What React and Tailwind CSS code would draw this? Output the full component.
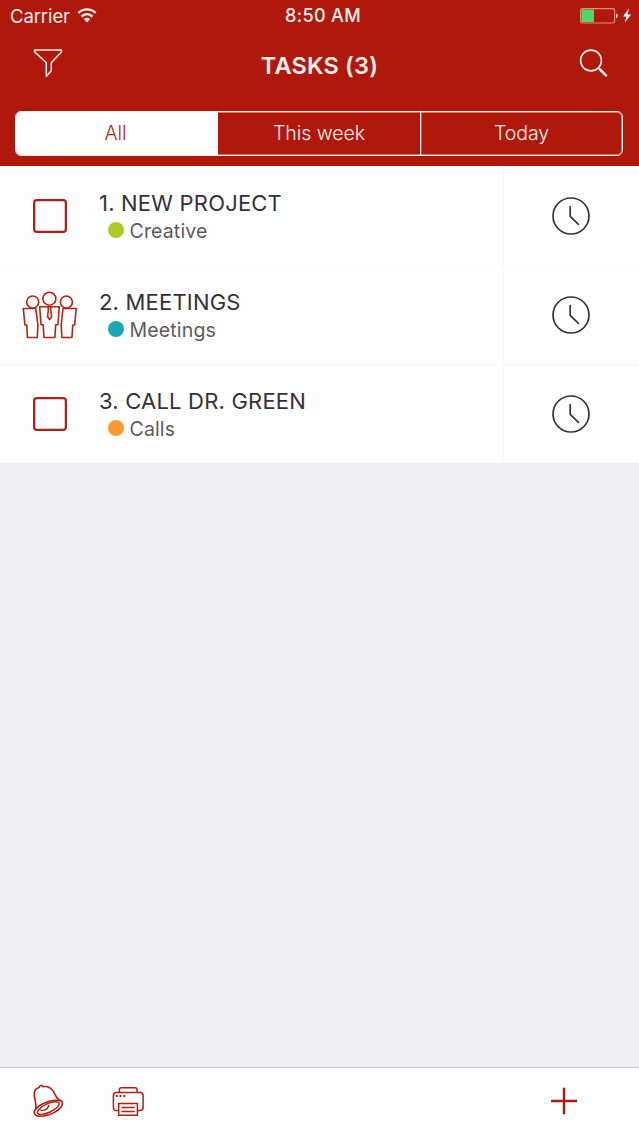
import React from "react";

const FilterIcon = () => (
  <svg className="h-8 w-8" viewBox="0 0 32 32" fill="none" stroke="#fff0ea" strokeWidth="1.5" strokeLinejoin="round">
    <path d="M2.6 2H29.4V3.9L19.3 14.7V22.8L14.3 28.2V14.7L2.6 3.9Z" />
  </svg>
);

const SearchIcon = () => (
  <svg className="h-8 w-8" viewBox="0 0 32 32" fill="none" stroke="#fff0ea" strokeLinecap="round">
    <circle cx="13" cy="12.5" r="10.4" strokeWidth="1.6" />
    <path d="M20.6 20L22 21.4" strokeWidth="1.6" />
    <path d="M22.2 21.7L28 27.4" strokeWidth="2.6" />
  </svg>
);

const WifiIcon = () => (
  <svg className="h-4 w-5" viewBox="0 0 20 16" fill="none" stroke="#fff4f0" strokeWidth="2.4">
    <path d="M1.3 5C6.3 .2 13.7 .2 18.7 5" />
    <path d="M4.5 8.5C7.8 5.5 12.2 5.5 15.5 8.5" />
    <path d="M10 14.4L6.8 11.1C8.6 9.4 11.4 9.4 13.2 11.1Z" fill="#fff4f0" stroke="none" />
  </svg>
);

const BatteryIcon = () => (
  <svg className="h-4 w-[52px]" viewBox="0 0 52 16" fill="none">
    <rect x="0.6" y="0.6" width="34" height="14.4" rx="2.2" stroke="#e99074" strokeWidth="1.1" />
    <rect x="1.5" y="1.5" width="12.5" height="12.6" rx="1" fill="#4cd964" />
    <path d="M36 5.4C38.4 5.8 38.4 9.8 36 10.2Z" fill="#ffe0cf" />
    <path d="M49 0.6L43 8.4H46.3L44.8 14.6L51.2 6.5H47.6Z" fill="#fff" />
  </svg>
);

const ClockIcon = () => (
  <svg className="h-10 w-10" viewBox="0 0 40 40" fill="none" stroke="#36343a" strokeWidth="1.7" strokeLinecap="round">
    <circle cx="20" cy="20" r="18" />
    <path d="M19.2 10.6V20.4L27.4 28.3" strokeLinejoin="round" />
  </svg>
);

const PeopleIcon = () => (
  <svg className="h-[54px] w-[60px]" viewBox="0 0 60 54" fill="none" stroke="#b52216" strokeWidth="1.6" strokeLinejoin="round">
    <circle cx="12.7" cy="14" r="6" />
    <path d="M3.3 20.5H15.8L17.9 37L17.3 49.5H7.4L6.8 37H4.9Z" />
    <circle cx="29.4" cy="10.7" r="6.5" />
    <path d="M19.7 18.7H39.3L37.9 36.7H35.7L34.9 49.5H24L23.2 36.7H21Z" />
    <path d="M28 18.8H30.9L30.7 21L31.6 28.8L29.6 31.5L27.6 28.8L28.4 21Z" />
    <circle cx="46.4" cy="14" r="6" />
    <path d="M43 20.5H56.2L54.7 37H52.8L51.9 49.5H41.9L41.2 37Z" />
  </svg>
);

const BellIcon = () => (
  <svg className="h-[34px] w-8" viewBox="0 0 32 34" fill="none" stroke="#b21f13" strokeWidth="1.6" strokeLinejoin="round">
    <path d="M3.3 25.8C5.6 20.8 2 15.4 2.2 9.8C2.2 6.5 4.5 4.1 7.2 3.5C7.3 1 9.7 .8 11 2.6C15 2 19.2 4 21.4 7.4C24.2 11.8 23.8 15 29.7 17.2" />
    <path d="M29.7 17.2C32 20.1 28.5 25.2 22 28.6C14.5 32.5 4.7 33.8 2.7 29.9C2 28.5 2.2 27.1 3.3 25.8C6 21.5 15.5 16.4 24 16.3C27 16.3 29 16.4 29.7 17.2Z" />
    <ellipse cx="16.3" cy="24.1" rx="11.9" ry="4.3" transform="rotate(-25 16.3 24.1)" strokeWidth="1.4" />
    <path d="M8.4 25.6C10 27.8 15.8 26 17 20.8" strokeWidth="1.4" />
  </svg>
);

const PrinterIcon = () => (
  <svg className="h-8 w-8" viewBox="0 0 32 32" fill="none" stroke="#b21f13" strokeWidth="1.5">
    <path d="M7.4 7.4V4.8C7.4 3.5 8.2 2.7 9.5 2.7H22.9C24.2 2.7 25 3.5 25 4.8V7.4" />
    <path d="M6.6 25.6H4.4C2.5 25.6 1.4 24.5 1.4 22.6V10.4C1.4 8.5 2.5 7.4 4.4 7.4H28.1C30 7.4 31.1 8.5 31.1 10.4V22.6C31.1 24.5 30 25.6 28.1 25.6H25.4" />
    <path d="M6.7 18.4H25.4V30.2H6.7ZM9.4 22.6H22.7M9.4 26.4H22.7" />
    <path d="M3.8 11.1H5.8M7.5 11.1H9.5M11.3 11.1H13.3" strokeWidth="2" />
  </svg>
);

const PlusIcon = () => (
  <svg className="h-7 w-7" viewBox="0 0 28 28" fill="none" stroke="#ac1a10" strokeWidth="2.4">
    <path d="M14 0.8V27.2M1 14H27" />
  </svg>
);

const Checkbox = () => (
  <span className="h-[34px] w-[34px] rounded-[4px] border-2 border-[#ad2018] shadow-[inset_0_0_0_0.5px_#ad201880]" />
);

const tasks = [
  { title: "1. NEW PROJECT", category: "Creative", dot: "bg-[#aecb24]", icon: <Checkbox /> },
  { title: "2. MEETINGS", category: "Meetings", dot: "bg-[#19a6b8]", icon: <PeopleIcon /> },
  { title: "3. CALL DR. GREEN", category: "Calls", dot: "bg-[#fb9934]", icon: <Checkbox /> },
];

export default function App() {
  return (
    <div className="flex h-[1136px] w-[639px] flex-col overflow-hidden bg-[#efeef1] font-['Inter',sans-serif]">
      <header className="h-[166px] shrink-0 bg-[#af180a] text-[#fff0ea]">
        <div className="grid h-8 grid-cols-3 items-center pr-[7px] pl-[10px]">
          <div className="flex items-center gap-[7px]">
            <span className="text-[18.5px] leading-8 tracking-[-0.1px]">Carrier</span>
            <WifiIcon />
          </div>
          <span className="pl-[4px] text-center text-[18px] leading-8 font-medium tracking-[0.35px]">8:50 AM</span>
          <div className="flex justify-end">
            <BatteryIcon />
          </div>
        </div>
        <div className="flex h-[79px] items-start justify-between pr-[29px] pl-8">
          <button className="pt-4" aria-label="Filter"><FilterIcon /></button>
          <h1 className="pt-[18px] pr-[3px] text-[23.5px] leading-8 font-semibold tracking-[0.2px]">TASKS (3)</h1>
          <button className="pt-4" aria-label="Search"><SearchIcon /></button>
        </div>
        <div className="mr-4 ml-[15px] grid h-[45px] grid-cols-3 overflow-hidden rounded-[6px] border border-[#fff0ea] text-[19.5px] font-light tracking-[-0.05px] shadow-[inset_0_0_0_1px_#fff0ea70]">
          <button className="bg-white pr-[3px] text-[#b52216]">All</button>
          <button>This week</button>
          <button className="border-l border-[#fff0ea] shadow-[inset_1px_0_0_#fff0ea50]">Today</button>
        </div>
      </header>

      <main className="flex-1">
        {tasks.map((task) => (
          <div key={task.title} className="flex h-[99px] border-t border-[#f8f7f9] bg-[#fefefe] first:border-[#fefefe]">
            <div className="flex w-[99px] items-center justify-center">{task.icon}</div>
            <div className="flex flex-1 flex-col pt-5">
              <span className="text-[22px] leading-8 tracking-[0.2px] whitespace-nowrap text-[#343238]">{task.title}</span>
              <span className="-mt-1 flex items-center gap-[5.5px] pl-[9px] text-[#5d5b61]">
                <span className={`mb-[3px] h-4 w-4 rounded-full ${task.dot}`} />
                <span className="text-[19.5px] leading-8 tracking-[0.15px]">{task.category}</span>
              </span>
            </div>
            <div className="flex w-[136px] items-center justify-center border-l border-[#f6f5f8] pr-px">
              <ClockIcon />
            </div>
          </div>
        ))}
      </main>

      <footer className="flex h-[69px] shrink-0 items-center border-t border-[#c9c8cc] bg-[#fefefe] pr-[61px] pb-[2px] pl-8">
        <button aria-label="Reminders"><BellIcon /></button>
        <button className="ml-12" aria-label="Print"><PrinterIcon /></button>
        <button className="ml-auto" aria-label="Add task"><PlusIcon /></button>
      </footer>
    </div>
  );
}
